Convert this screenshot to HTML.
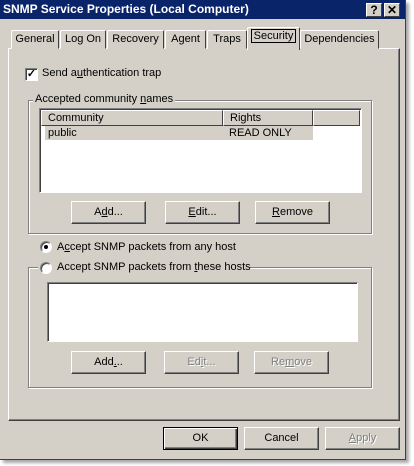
<!DOCTYPE html><html><head><style>
*{margin:0;padding:0;box-sizing:border-box}
body{width:414px;height:466px;background:#fff;position:relative;overflow:hidden;font-family:"Liberation Sans",Tahoma,sans-serif;font-size:11px;color:#000}
.a{position:absolute;white-space:nowrap}
.win{left:0;top:0;width:406px;height:460px;background:#d4d0c8;border-right:1px solid #404040;border-bottom:1px solid #404040;box-shadow:3px 3px 3px rgba(0,0,0,.35)}
.title{left:0;top:0;width:405px;height:19px;background:#0a246a;color:#fff;font-weight:bold;font-size:12px;line-height:19px;padding-left:3px}
.tb{top:3px;width:16px;height:14px;background:#d4d0c8;border:1px solid;border-color:#fff #404040 #404040 #fff;color:#000;font-weight:bold;font-size:12px;line-height:12px;text-align:center}
.tab{top:30px;height:19px;border:1px solid;border-color:#fff #404040 transparent #fff;border-radius:2px 2px 0 0;line-height:17px;text-align:center;font-size:11px;background:#d4d0c8}
.panel{left:8px;top:48px;width:392px;height:373px;border:1px solid;border-color:#fff #404040 #404040 #fff;box-shadow:inset -1px -1px 0 #808080}
.grp{border:1px solid #808080;box-shadow:1px 1px 0 #fff,inset 1px 1px 0 #fff}
.lbl{background:#d4d0c8;padding:0 2px;font-size:11px;line-height:13px}
.btn{width:75px;height:23px;border:1px solid;border-color:#fff #404040 #404040 #fff;box-shadow:inset -1px -1px 0 #808080;text-align:center;line-height:20px;font-size:11px;background:#d4d0c8}
.dis{color:#808080;text-shadow:1px 1px 0 #fff}
.sunk{background:#fff;border:1px solid;border-color:#808080 #fff #fff #808080;box-shadow:inset 1px 1px 0 #404040}
.radio{width:12px;height:12px;border-radius:50%;background:#fff;border:1px solid;border-color:#808080 #fff #fff #808080;box-shadow:inset 1px 1px 0 #404040}
.t{font-size:11px;line-height:13px}
u{text-decoration:underline}
</style></head><body>
<div class="a win"></div>
<div class="a title">SNMP Service Properties (Local Computer)</div>
<div class="a tb" style="left:366px">?</div>
<div class="a tb" style="left:384px">✕</div>

<div class="a panel"></div>
<div class="a tab" style="left:11px;width:48px">General</div>
<div class="a tab" style="left:60px;width:46px">Log On</div>
<div class="a tab" style="left:107px;width:57px">Recovery</div>
<div class="a tab" style="left:165px;width:41px">Agent</div>
<div class="a tab" style="left:207px;width:40px">Traps</div>
<div class="a tab" style="left:247px;top:27px;height:23px;width:53px;line-height:16px;border-bottom:none"><span style="border:1px solid #000;padding:0 2px">Security</span></div>
<div class="a tab" style="left:300px;width:79px">Dependencies</div>

<div class="a sunk" style="left:25px;top:68px;width:13px;height:13px;font-size:11px;line-height:11px;text-align:center;font-weight:bold">✓</div>
<div class="a t" style="left:42px;top:67px">Send a<u>u</u>thentication trap</div>

<div class="a grp" style="left:28px;top:100px;width:344px;height:134px"></div>
<div class="a lbl" style="left:33px;top:93px">Accepted community <u>n</u>ames</div>
<div class="a sunk" style="left:39px;top:108px;width:323px;height:85px"></div>
<div class="a" style="left:41px;top:110px;width:182px;height:16px;border:1px solid;border-color:#fff #404040 #404040 #fff;background:#d4d0c8;padding-left:6px;line-height:14px;font-size:11px">Community</div>
<div class="a" style="left:223px;top:110px;width:90px;height:16px;border:1px solid;border-color:#fff #404040 #404040 #fff;background:#d4d0c8;padding-left:6px;line-height:14px;font-size:11px">Rights</div>
<div class="a" style="left:313px;top:110px;width:47px;height:16px;border:1px solid;border-color:#fff #404040 #404040 #fff;background:#d4d0c8"></div>
<div class="a" style="left:45px;top:126px;width:268px;height:14px;background:#d4d0c8;font-size:11px;line-height:14px"><span style="position:absolute;left:3px">public</span><span style="position:absolute;left:184px">READ ONLY</span></div>

<div class="a btn" style="left:71px;top:201px">A<u>d</u>d...</div>
<div class="a btn" style="left:165px;top:201px"><u>E</u>dit...</div>
<div class="a btn" style="left:255px;top:201px"><u>R</u>emove</div>

<div class="a radio" style="left:40px;top:241px"></div>
<div class="a" style="left:44px;top:245px;width:4px;height:4px;background:#000;border-radius:50%"></div>
<div class="a t" style="left:57px;top:241px">A<u>c</u>cept SNMP packets from any host</div>

<div class="a grp" style="left:28px;top:267px;width:344px;height:121px"></div>
<div class="a lbl" style="left:38px;top:261px;width:212px;height:14px"></div>
<div class="a radio" style="left:40px;top:262px"></div>
<div class="a t" style="left:57px;top:261px">Accept SNMP packets from <u>t</u>hese hosts</div>
<div class="a sunk" style="left:47px;top:282px;width:311px;height:60px"></div>

<div class="a btn" style="left:71px;top:351px">Add<u>.</u>..</div>
<div class="a btn dis" style="left:164px;top:351px">Ed<u>i</u>t...</div>
<div class="a btn dis" style="left:254px;top:351px">Re<u>m</u>ove</div>

<div class="a btn" style="left:163px;top:427px;border:1px solid #000;box-shadow:inset 1px 1px 0 #fff,inset -1px -1px 0 #404040,inset -2px -2px 0 #808080">OK</div>
<div class="a btn" style="left:244px;top:427px">Cancel</div>
<div class="a btn dis" style="left:325px;top:427px"><u>A</u>pply</div>
</body></html>
